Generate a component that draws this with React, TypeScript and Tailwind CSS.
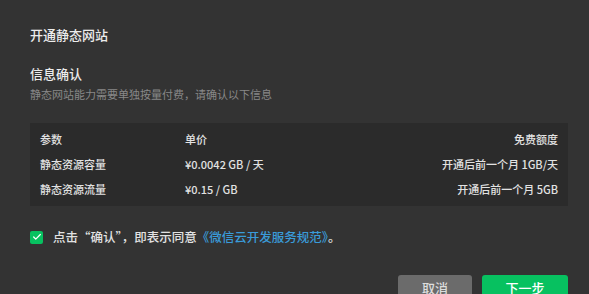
import { Check } from "lucide-react";

const rows = [
  { name: "静态资源容量", price: "¥0.0042 GB / 天", free: "开通后前一个月 1GB/天" },
  { name: "静态资源流量", price: "¥0.15 / GB", free: "开通后前一个月 5GB" },
];

export default function App() {
  return (
    <div
      className="h-[294px] w-[589px] overflow-hidden bg-[#333333] pl-[30px] pr-[21px] pt-[25px]"
      style={{ fontFamily: '"Noto Sans CJK SC", sans-serif' }}
    >
      {/* Header */}
      <h1 className="text-[13px] leading-5 font-medium text-[#ececec]">开通静态网站</h1>

      <h2 className="mt-[19px] text-[13px] leading-5 font-medium text-[#ececec]">信息确认</h2>
      <p className="mt-[2px] text-[11px] leading-4 text-[#888888]">
        静态网站能力需要单独按量付费，请确认以下信息
      </p>

      {/* Table */}
      <div className="mt-[21px] bg-[#2b2b2b] px-[10px] py-[4px] text-[11px] font-medium text-[#e2e2e2]">
        <div className="grid h-[25px] grid-cols-[145px_1fr_1fr] items-center">
          <span>参数</span>
          <span>单价</span>
          <span className="text-right">免费额度</span>
        </div>
        {rows.map((row) => (
          <div
            key={row.name}
            className="grid h-[25px] grid-cols-[145px_1fr_1fr] items-center"
          >
            <span>{row.name}</span>
            <span>{row.price}</span>
            <span className="text-right">{row.free}</span>
          </div>
        ))}
      </div>

      {/* Agreement */}
      <div className="mt-[21px] flex h-5 items-center gap-[10px] text-[12.5px] font-medium text-[#e2e2e2]">
        <span className="flex h-[13px] w-[13px] items-center justify-center rounded-[2px] bg-[#07c160]">
          <Check className="h-[10px] w-[10px] text-white" strokeWidth={3} />
        </span>
        <span>
          点击“确认”，即表示同意
          <span className="text-[#3a9bd9]">《微信云开发服务规范》</span>。
        </span>
      </div>

      {/* Actions */}
      <div className="mt-[28px] flex justify-end gap-[10px]">
        <button className="h-[26px] w-[74px] rounded-[3px] bg-[#6b6b6b] text-[13px] leading-[26px] font-medium text-[#dddddd]">
          取消
        </button>
        <button className="h-[26px] w-[86px] rounded-[3px] bg-[#07c160] text-[13px] leading-[26px] font-medium text-white">
          下一步
        </button>
      </div>
    </div>
  );
}
